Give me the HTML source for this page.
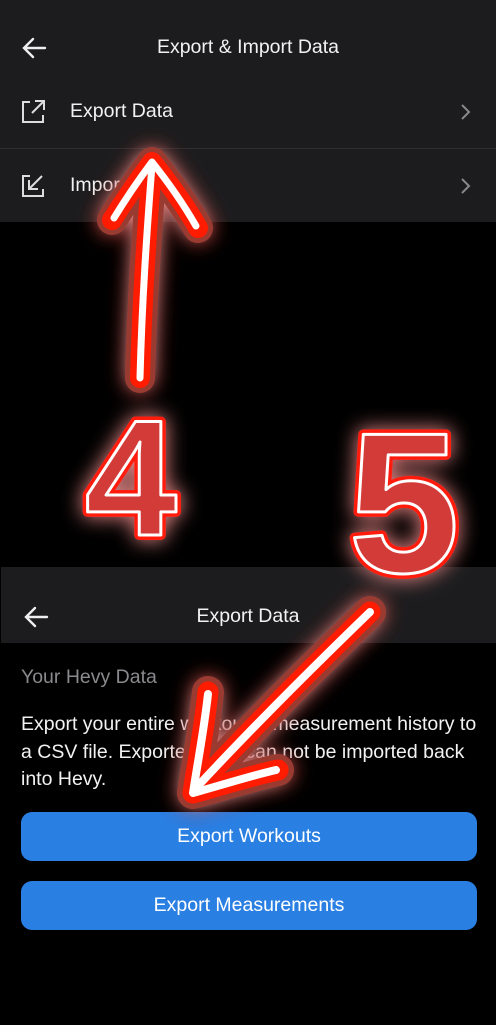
<!DOCTYPE html>
<html><head><meta charset="utf-8"><style>
*{margin:0;padding:0;box-sizing:border-box}
body{width:496px;height:1025px;background:#000;font-family:"Liberation Sans",sans-serif;color:#f2f2f2;position:relative;overflow:hidden}
.abs{position:absolute}
.panel{left:0;top:0;width:496px;height:222px;background:#1c1c1e}
.t{position:absolute;font-size:19.5px;white-space:nowrap}
.btn{position:absolute;left:21px;width:456px;height:49px;background:#2a7fe3;border-radius:11px;color:#fff;font-size:19.5px;text-align:center;line-height:49px}
</style></head><body>
<div class="abs panel"></div>
<div class="abs" style="left:0;top:148px;width:496px;height:1px;background:#2e2e31"></div>
<svg class="abs" style="left:20px;top:36px" width="28" height="24" viewBox="0 0 28 24"><path d="M25 12H4M13 3L4 12l9 9" fill="none" stroke="#eee" stroke-width="2.4" stroke-linecap="round"/></svg>
<div class="t" style="left:0;width:496px;text-align:center;top:36px">Export &amp; Import Data</div>
<svg class="abs" style="left:20px;top:99px" width="26" height="26" viewBox="0 0 26 26"><path d="M10 3H3v20h20v-7M15 2h9v9M24 2L12 14" fill="none" stroke="#ddd" stroke-width="2"/></svg>
<div class="t" style="left:70px;top:100px">Export Data</div>
<svg class="abs" style="left:460px;top:103px" width="12" height="18"><path d="M2 2l7 7-7 7" fill="none" stroke="#888" stroke-width="2"/></svg>
<svg class="abs" style="left:20px;top:173px" width="26" height="26" viewBox="0 0 26 26"><path d="M10 3H3v20h20v-7M22 3L10 15M9 7v9h9" fill="none" stroke="#ddd" stroke-width="2"/></svg>
<div class="t" style="left:70px;top:174px">Import Data</div>
<svg class="abs" style="left:460px;top:177px" width="12" height="18"><path d="M2 2l7 7-7 7" fill="none" stroke="#888" stroke-width="2"/></svg>

<div class="abs" style="left:1px;top:567px;width:495px;height:76px;background:#1c1c1e"></div>
<svg class="abs" style="left:22px;top:605px" width="28" height="24" viewBox="0 0 28 24"><path d="M25 12H4M13 3L4 12l9 9" fill="none" stroke="#eee" stroke-width="2.4" stroke-linecap="round"/></svg>
<div class="t" style="left:0;width:496px;text-align:center;top:605px">Export Data</div>
<div class="t" style="left:21px;top:666px;color:#8a8a8e">Your Hevy Data</div>
<div class="abs" style="left:21px;top:711px;width:462px;font-size:19.5px;line-height:27.5px">Export your entire workout &amp; measurement history to a CSV file. Exported data can not be imported back into Hevy.</div>
<div class="btn" style="top:812px">Export Workouts</div>
<div class="btn" style="top:881px">Export Measurements</div>

<svg class="abs" style="left:0;top:0" width="496" height="1025">
<defs><filter id="g" x="-50%" y="-50%" width="200%" height="200%"><feGaussianBlur stdDeviation="10" result="b"/><feMerge><feMergeNode in="b"/><feMergeNode in="SourceGraphic"/></feMerge></filter></defs>
<g filter="url(#g)" fill="none" stroke-linecap="round" stroke-linejoin="round">
<path id="a1" d="M140 378 C142 300 147 230 152 165 M112 220 C128 195 140 178 152 162 C168 182 185 205 198 228" stroke="#9a3a32" stroke-width="30"/>
<path d="M140 378 C142 300 147 230 152 165 M112 220 C128 195 140 178 152 162 C168 182 185 205 198 228" stroke="#ff1a00" stroke-width="20"/>
<path d="M140 378 C142 300 147 230 152 165 M114 218 C128 195 140 178 152 162 C168 182 184 205 196 226" stroke="#fff" stroke-width="7"/>
<path d="M370 612 C310 670 250 730 196 788 M208 692 C204 730 198 760 193 793 C222 785 250 776 278 770" stroke="#9a3a32" stroke-width="32"/>
<path d="M370 612 C310 670 250 730 196 788 M208 692 C204 730 198 760 193 793 C222 785 250 776 278 770" stroke="#ff1a00" stroke-width="21"/>
<path d="M370 612 C310 670 250 730 196 788 M208 694 C204 730 198 760 193 793 C222 785 250 776 276 770" stroke="#fff" stroke-width="8"/>
<text x="131" y="535" text-anchor="middle" font-family="Liberation Sans" font-weight="bold" font-size="165" fill="#d33a38" stroke="#ff1a0a" stroke-width="10">4</text>
<text x="131" y="535" text-anchor="middle" font-family="Liberation Sans" font-weight="bold" font-size="165" fill="#d33a38" stroke="#fff" stroke-width="3">4</text>
<text x="404" y="572" text-anchor="middle" font-family="Liberation Sans" font-weight="bold" font-size="200" fill="#d33a38" stroke="#ff1a0a" stroke-width="10">5</text>
<text x="404" y="572" text-anchor="middle" font-family="Liberation Sans" font-weight="bold" font-size="200" fill="#d33a38" stroke="#fff" stroke-width="3">5</text>
</g>
</svg>
</body></html>
